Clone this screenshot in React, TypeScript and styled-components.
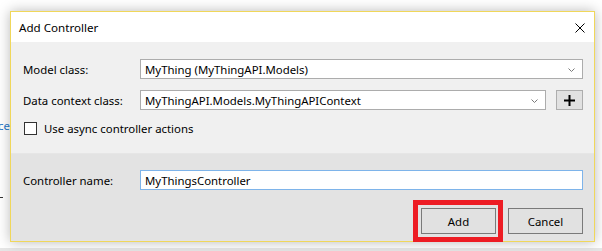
import React from 'react';
import styled, { createGlobalStyle } from 'styled-components';

const GlobalStyle = createGlobalStyle`
  html, body {
    margin: 0;
    padding: 0;
    background: #ffffff;
    overflow: hidden;
  }
  * {
    box-sizing: border-box;
  }
`;

const App = () => (
    <>
        <GlobalStyle />
        <Page>
            <BehindLink>ce</BehindLink>
            <BehindDash />
            <Dialog>
                <TitleBar>
                    <Title>Add Controller</Title>
                    <CloseButton aria-label="Close">
                        <svg width="10" height="10" viewBox="0 0 10 10">
                            <path d="M0.5 0.5 L9.5 9.5 M9.5 0.5 L0.5 9.5" stroke="#000" strokeWidth="1" />
                        </svg>
                    </CloseButton>
                </TitleBar>
                <Body>
                    <Label>Model class:</Label>
                    <Select $wide>
                        <span>MyThing (MyThingAPI.Models)</span>
                        <Chevron />
                    </Select>
                    <Label>Data context class:</Label>
                    <Select>
                        <span>MyThingAPI.Models.MyThingAPIContext</span>
                        <Chevron />
                    </Select>
                    <PlusButton>
                        <svg width="11" height="11" viewBox="0 0 11 11">
                            <path d="M5.5 0 V11 M0 5.5 H11" stroke="#000" strokeWidth="2" />
                        </svg>
                    </PlusButton>
                    <CheckRow>
                        <CheckBox />
                        <span>Use async controller actions</span>
                    </CheckRow>
                </Body>
                <Footer>
                    <NameRow>
                        <Label>Controller name:</Label>
                        <TextInput>MyThingsController</TextInput>
                    </NameRow>
                    <ButtonRow>
                        <Highlight>
                            <Button>Add</Button>
                        </Highlight>
                        <Button>Cancel</Button>
                    </ButtonRow>
                </Footer>
            </Dialog>
            <BottomStrip />
        </Page>
    </>
);

const Chevron = () => (
    <ChevronIcon width="7" height="4" viewBox="0 0 7 4">
        <path d="M0.5 0.5 L3.5 3.5 L6.5 0.5" stroke="#7a7a7a" strokeWidth="1" fill="none" />
    </ChevronIcon>
);

const Page = styled('div')`
  position: relative;
  width: 602px;
  height: 251px;
  padding: 11px 0 0 10px;
  font-family: 'Noto Sans', 'Open Sans', sans-serif;
  font-size: 11.4px;
  color: #000;
`;

const BehindLink = styled('span')`
  position: absolute;
  left: -2px;
  top: 118px;
  color: #1e78c8;
  font-size: 11.4px;
`;

const BehindDash = styled('div')`
  position: absolute;
  left: 0;
  top: 197px;
  width: 3px;
  height: 1px;
  background: #333;
`;

const BottomStrip = styled('div')`
  position: absolute;
  left: 0;
  right: 0;
  top: 248px;
  height: 3px;
  background: #e6e6e6;
`;

const Dialog = styled('section')`
  position: relative;
  z-index: 1;
  width: 585px;
  height: 231px;
  border: 1px solid #f0d75a;
  background: #f0f0f0;
  box-shadow: 0 0 12px rgba(0, 0, 0, 0.28);
  display: flex;
  flex-direction: column;
`;

const TitleBar = styled('header')`
  height: 30px;
  background: #ffffff;
  display: flex;
  align-items: center;
  justify-content: space-between;
  padding: 0 9px 0 8px;
`;

const Title = styled('h1')`
  margin: 0;
  font-size: 11.6px;
  font-weight: normal;
`;

const CloseButton = styled('div')`
  display: flex;
  width: 10px;
  height: 10px;
  margin-top: 1px;
`;

const Body = styled('div')`
  height: 111px;
  padding: 17px 11px 0 12px;
  display: grid;
  grid-template-columns: 117px 1fr 27px;
  grid-template-rows: 20px 20px 13px;
  column-gap: 10px;
  row-gap: 11px;
  align-items: center;
`;

const Label = styled('label')`
  white-space: nowrap;
`;

const Select = styled('div')<{ $wide?: boolean }>`
  grid-column: ${p => (p.$wide ? '2 / 4' : '2 / 3')};
  height: 20px;
  margin-left: -10px;
  border: 1px solid #acacac;
  background: #fff;
  display: flex;
  align-items: center;
  justify-content: space-between;
  padding: 0 7px 0 4px;
  white-space: nowrap;
`;

const ChevronIcon = styled('svg')`
  flex: none;
  margin-top: 1px;
`;

const PlusButton = styled('div')`
  height: 20px;
  border: 1px solid #adadad;
  background: #e1e1e1;
  display: flex;
  align-items: center;
  justify-content: center;
`;

const CheckRow = styled('div')`
  grid-column: 1 / 4;
  display: flex;
  align-items: center;
  gap: 7px;
  margin-top: 1px;
  margin-left: 1px;
  white-space: nowrap;
`;

const CheckBox = styled('span')`
  width: 13px;
  height: 13px;
  border: 1px solid #333;
  background: #fff;
  flex: none;
`;

const Footer = styled('footer')`
  flex: 1;
  background: #e3e3e3;
  border-top: 1px solid #e6e6e6;
  padding: 16px 11px 0 12px;
  display: flex;
  flex-direction: column;
  gap: 18px;
`;

const NameRow = styled('div')`
  display: grid;
  grid-template-columns: 117px 1fr;
  align-items: center;
  height: 20px;
`;

const TextInput = styled('div')`
  height: 20px;
  border: 1px solid #7eb4ea;
  background: #fff;
  display: flex;
  align-items: center;
  padding: 0 4px;
`;

const ButtonRow = styled('div')`
  display: flex;
  justify-content: flex-end;
  gap: 12px;
`;

const Highlight = styled('div')`
  position: relative;
  display: flex;

  &::after {
    content: '';
    position: absolute;
    top: -8px;
    bottom: -8px;
    left: -8px;
    right: -7px;
    border: 5px solid #ed1c24;
    pointer-events: none;
  }
`;

const Button = styled('div')`
  width: 75px;
  height: 26px;
  border: 1px solid #7a7a7a;
  background: #e1e1e1;
  display: flex;
  align-items: center;
  justify-content: center;
`;

export default App;
